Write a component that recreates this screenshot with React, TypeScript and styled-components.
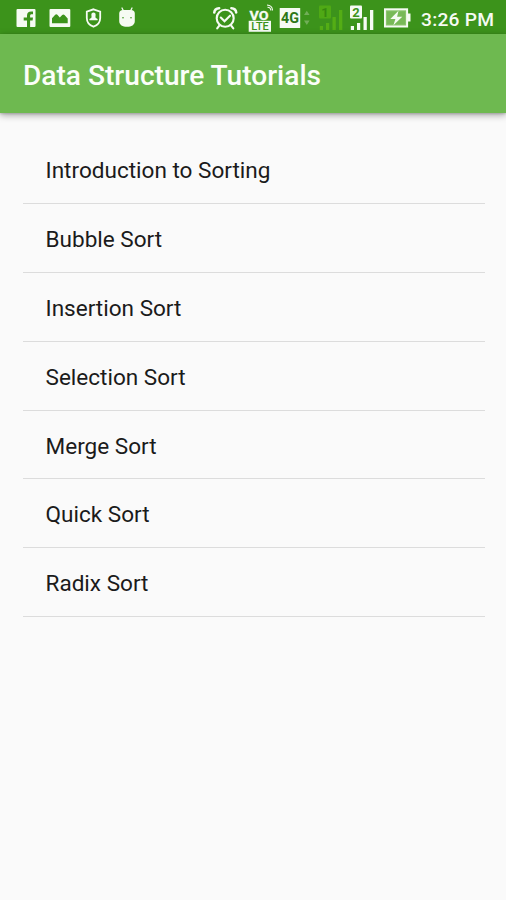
import React from 'react';
import styled, { createGlobalStyle } from 'styled-components';

const GlobalStyle = createGlobalStyle`
  * { box-sizing: border-box; }
  body {
    margin: 0;
    background: #fafafa;
    font-family: Roboto, 'Liberation Sans', sans-serif;
    overflow: hidden;
  }
`;

const Screen = styled.div`
  display: flex;
  flex-direction: column;
  width: 506px;
  height: 900px;
  background: #fafafa;
`;

const StatusBar = styled.div`
  display: flex;
  justify-content: space-between;
  height: 34px;
  padding: 0 11px 0 16px;
  background: #3c931b;
  color: #f6fbf3;
`;

const IconGroup = styled.div`
  display: flex;
`;

const Icon = styled.svg<{ $before?: number }>`
  display: block;
  flex: none;
  height: 34px;
  margin-left: ${({ $before = 0 }) => $before}px;
`;

const Clock = styled.time`
  width: 74px;
  margin-left: 10px;
  font-size: 19.2px;
  font-weight: 500;
  letter-spacing: 0.25px;
  line-height: 39px;
  white-space: nowrap;
`;

const AppBar = styled.header`
  display: flex;
  align-items: center;
  height: 79px;
  padding: 4px 23px 0;
  background: #6eb950;
  box-shadow: 0 2px 7px rgba(0, 0, 0, 0.36), 0 1px 2px rgba(0, 0, 0, 0.14);
`;

const Title = styled.h1`
  margin: 0;
  color: #fbfef9;
  font-size: 28.1px;
  font-weight: 500;
  line-height: 34px;
  white-space: nowrap;
`;

const List = styled.ul`
  margin: 22px 21px 0 23px;
  padding: 0;
  list-style: none;
`;

const ListItem = styled.li`
  display: flex;
  align-items: center;
  height: 68.9px;
  padding: 4px 22.5px 0;
  border-bottom: 1px solid #dcdcdc;
  color: #1b1b1b;
  font-size: 22.55px;
  line-height: 30px;
`;

const GREEN = '#3c931b';
const topics = [
  'Introduction to Sorting',
  'Bubble Sort',
  'Insertion Sort',
  'Selection Sort',
  'Merge Sort',
  'Quick Sort',
  'Radix Sort',
];

const FacebookIcon = () => (
  <Icon width="20" viewBox="16 0 20 34">
    <rect x="16.5" y="9" width="19" height="18" rx="1" fill="currentColor" />
    <path d="M27 27v-6.4h-3.3v-3H27v-1.8c0-3 1.5-4.3 4.2-4.3h1.8v2.8h-1.3c-1.2 0-1.6.5-1.6 1.6v1.7H33l-.4 3h-2.5V27z" fill={GREEN} />
  </Icon>
);

const GalleryIcon = () => (
  <Icon $before={13} width="22" viewBox="49 0 22 34">
    <rect x="49.5" y="9" width="20.8" height="18" rx="1" fill="currentColor" />
    <path d="M52 23.3v-5l3.2-3.5q1.2-1 2.2 0l2.4 2.7 2.4-2.5q1.2-1 2.3 0l3.2 3.5v4.8z" fill={GREEN} />
  </Icon>
);

const ShieldIcon = () => (
  <Icon $before={14} width="17" viewBox="85 0 17 34">
    <path d="M93.5 9.3l6.7 2.4v6.2c0 4.2-2.5 7.2-6.7 8.8-4.2-1.6-6.7-4.6-6.7-8.8v-6.2z" fill="none" stroke="currentColor" strokeWidth="1.8" />
    <path d="M93.5 12.4c1.5 0 2.3 1.1 2.1 2.5-.1 1.5-.4 2.3.3 3l1.7 1.2v1.2h-8.2v-1.2l1.7-1.2c.7-.7.4-1.5.3-3-.2-1.4.6-2.5 2.1-2.5z" fill="currentColor" />
  </Icon>
);

const AndroidIcon = () => (
  <Icon $before={16} width="18" viewBox="118 0 18 34">
    <path d="M122 8l1.5 3M132 8l-1.5 3" stroke="currentColor" strokeWidth="1.3" strokeLinecap="round" />
    <path d="M119.2 13.5q0-3.5 4-3.5h7.6q4 0 4 3.5V21c0 4-3.400 5.800-7.800 5.800s-7.800-1.800-7.800-5.800z" fill="currentColor" />
    <circle cx="123" cy="17.8" r=".8" fill={GREEN} />
    <circle cx="131" cy="17.8" r=".8" fill={GREEN} />
  </Icon>
);

const AlarmIcon = () => (
  <Icon width="25" viewBox="213 0 25 34">
    <g fill="none" stroke="currentColor" strokeWidth="2.1" strokeLinecap="round">
      <circle cx="225.2" cy="18.2" r="8.5" />
      <path d="M220.8 17.5l3.7 3.7 5.5-5.5M219.5 25.3l-2.3 3M231 25.3l2.3 3" />
      <path d="M214.3 12.500c.2-2.300 2.200-4.100 4.800-4.300M236.200 12.500c-.2-2.300-2.200-4.100-4.800-4.300" strokeWidth="2.6" />
    </g>
  </Icon>
);

const VolteIcon = () => (
  <Icon $before={10} width="25" viewBox="248 0 25 34">
    <text x="249.5" y="19.5" fontSize="13.6" fontWeight="700" fill="currentColor" stroke="currentColor" strokeWidth=".3" textLength="19" lengthAdjust="spacingAndGlyphs">VO</text>
    <path d="M267.5 7.3q3.3 0 3.3 3.3M267 5q5.3.2 5.5 5.5" fill="none" stroke="currentColor" strokeWidth="1.1" />
    <rect x="248.7" y="20.8" width="22.3" height="11" fill="currentColor" />
    <text x="251.3" y="30" fontSize="10" fontWeight="500" fill={GREEN} textLength="17.5" lengthAdjust="spacingAndGlyphs">LTE</text>
  </Icon>
);

const NetworkIcon = () => (
  <Icon $before={6} width="31" viewBox="279 0 31 34">
    <rect x="279.7" y="8" width="20.5" height="20" rx=".5" fill="currentColor" />
    <text x="281" y="23" fontSize="14" fontWeight="700" fill="#2d7716" textLength="18" lengthAdjust="spacingAndGlyphs">4G</text>
    <path d="M304 15l2.8-4.3 2.8 4.3zM304 20.5h5.6l-2.8 4.5z" fill="#71ae58" />
  </Icon>
);

type SignalProps = { sim: string; before: number; muted?: boolean };

const SignalIcon = ({ sim, before, muted }: SignalProps) => {
  const color = muted ? '#54ad15' : 'currentColor';
  return (
    <Icon $before={before} width="26" viewBox="0 0 26 34">
      <rect x="1" y="5.5" width="12" height="13" rx="1" fill={muted ? '#4fa915' : color} />
      <text x="7" y="17" textAnchor="middle" fontSize="13" fontWeight="700" fill={muted ? '#35880f' : GREEN}>{sim}</text>
      <path d="M1.8 26H5v4H1.8zM8 23h3.200v7H8zM14.500 17h3.300v13h-3.300zM21 10h3.300v20H21z" fill={color} />
    </Icon>
  );
};

const BatteryIcon = () => (
  <Icon $before={9} width="27" viewBox="384 0 27 34">
    <rect x="384.9" y="9.3" width="22.2" height="17.2" fill="#8ac46c" stroke="currentColor" strokeWidth="2" />
    <rect x="387" y="11.4" width="18" height="13" fill="#78b957" />
    <path d="M407.5 13.5h3v8h-3z" fill="currentColor" />
    <path d="M398.5 10.8l-8.2 8.3h5.1l-2 6.1 8.9-8.5h-5.2z" fill="currentColor" />
  </Icon>
);

export default function App() {
  return (
    <Screen>
      <GlobalStyle />
      <StatusBar>
        <IconGroup>
          <FacebookIcon />
          <GalleryIcon />
          <ShieldIcon />
          <AndroidIcon />
        </IconGroup>
        <IconGroup>
          <AlarmIcon />
          <VolteIcon />
          <NetworkIcon />
          <SignalIcon sim="1" before={8} muted />
          <SignalIcon sim="2" before={5} />
          <BatteryIcon />
          <Clock>3:26 PM</Clock>
        </IconGroup>
      </StatusBar>
      <AppBar>
        <Title>Data Structure Tutorials</Title>
      </AppBar>
      <List>
        {topics.map((topic) => (
          <ListItem key={topic}>{topic}</ListItem>
        ))}
      </List>
    </Screen>
  );
}
